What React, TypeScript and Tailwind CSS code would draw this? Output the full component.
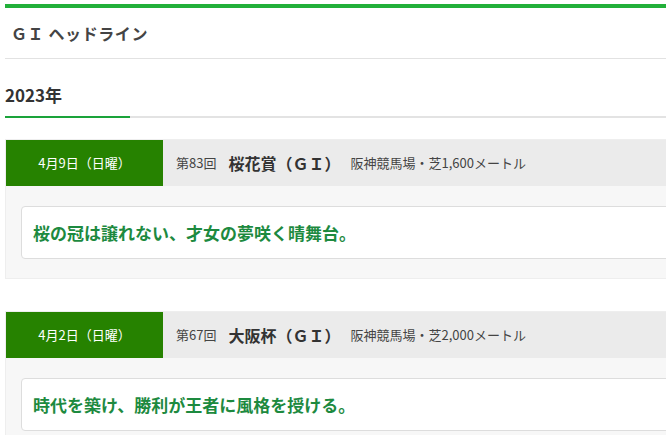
import React from "react"

type Race = {
  date: string
  round: string
  name: string
  course: string
  headline: string
}

const races: Race[] = [
  {
    date: "4月9日（日曜）",
    round: "第83回",
    name: "桜花賞（ＧＩ）",
    course: "阪神競馬場・芝1,600メートル",
    headline: "桜の冠は譲れない、才女の夢咲く晴舞台。",
  },
  {
    date: "4月2日（日曜）",
    round: "第67回",
    name: "大阪杯（ＧＩ）",
    course: "阪神競馬場・芝2,000メートル",
    headline: "時代を築け、勝利が王者に風格を授ける。",
  },
]

function RaceCard({ race }: { race: Race }) {
  return (
    <div className="border border-[#eeeeee] w-[700px]">
      <div className="flex h-[46px]">
        <div className="w-[157px] bg-[#268200] flex items-center justify-center text-white text-[13px]">
          {race.date}
        </div>
        <div className="flex-1 bg-[#ebebeb] flex items-center pl-[13px]">
          <span className="text-[13px] text-[#444]">{race.round}</span>
          <span className="ml-[12px] text-[16px] font-bold text-[#333]">{race.name}</span>
          <span className="ml-[10px] text-[13px] text-[#444]">{race.course}</span>
        </div>
      </div>
      <div className="bg-[#f7f7f7] pt-[20px] pb-[19px] pl-[15px]">
        <div className="bg-white border border-[#dddddd] rounded-[4px] h-[53px] flex items-center pl-[11px]">
          <p className="text-[17px] font-bold text-[#1d8a3f]">{race.headline}</p>
        </div>
      </div>
    </div>
  )
}

export default function App() {
  return (
    <div
      className="min-h-screen bg-white pt-[4px] pl-[5px] overflow-hidden"
      style={{ fontFamily: '"Noto Sans CJK JP", "Noto Sans", sans-serif' }}
    >
      <div className="h-[4px] bg-[#22b03a]" />
      <h2 className="h-[51px] border-b border-[#e2e2e2] flex items-center pl-[6px] text-[16px] font-bold text-[#444] tracking-[0.6px]">
        ＧＩ ヘッドライン
      </h2>

      <div className="pt-[24px]">
        <h3 className="text-[17px] font-bold text-[#333] leading-[24px] pb-[9px]">2023年</h3>
        <div className="flex h-[2px]">
          <div className="w-[125px] bg-[#1aa33a]" />
          <div className="flex-1 bg-[#e3e3e3]" />
        </div>
      </div>

      <div className="mt-[21px] flex flex-col gap-[32px]">
        {races.map((race) => (
          <RaceCard key={race.round} race={race} />
        ))}
      </div>
    </div>
  )
}
